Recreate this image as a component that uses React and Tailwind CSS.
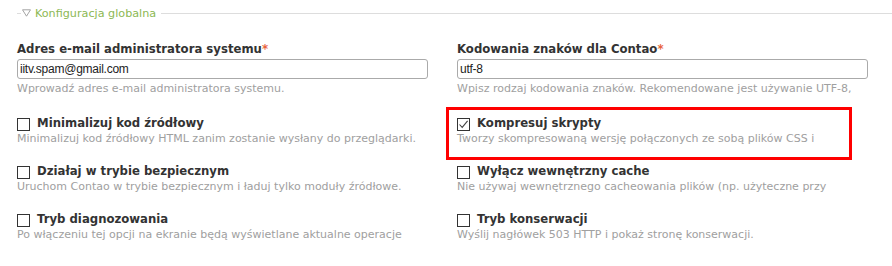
const VERDANA = { fontFamily: '"DejaVu Sans", Verdana, sans-serif' };

function Checkbox({ checked }) {
  return (
    <span className="mt-[2px] flex h-[13px] w-[13px] shrink-0 items-center justify-center border border-[#333] bg-white">
      {checked && (
        <svg width="11" height="11" viewBox="0 0 11 11" fill="none">
          <path d="M1.5 5.5 L4.2 8.4 L9.6 1.8" stroke="#444" strokeWidth="1.1" />
        </svg>
      )}
    </span>
  );
}

function TextField({ label, value, help }) {
  return (
    <div className="flex flex-col">
      <div className="h-[15px] text-[11.7px] font-bold leading-[15px] text-[#333]">
        {label}
        <span className="text-[#e8643c]">*</span>
      </div>
      <div className="mt-[2px] flex h-[20px] w-[411px] items-center rounded-[3px] border border-[#aaa] bg-white px-[2px]">
        <span
          className="text-[12px] tracking-[-0.25px] text-[#222]"
          style={{ fontFamily: '"Liberation Sans", Arial, sans-serif' }}
        >
          {value}
        </span>
      </div>
      <div className="mt-[2px] h-[15px] whitespace-nowrap text-[11px] leading-[15px] text-[#a0a0a0]">{help}</div>
    </div>
  );
}

function CheckField({ label, help, checked }) {
  return (
    <div className="flex h-[48px] flex-col">
      <div className="flex h-[15px] items-start gap-[7px]">
        <Checkbox checked={checked} />
        <span className="text-[11.7px] font-bold leading-[15px] text-[#333]">{label}</span>
      </div>
      <div className="h-[15px] whitespace-nowrap text-[11px] leading-[15px] text-[#a0a0a0]">{help}</div>
    </div>
  );
}

export default function App() {
  return (
    <div className="h-[266px] w-[892px] overflow-hidden bg-white" style={VERDANA}>
      {/* Fieldset legend */}
      <div className="flex h-[26px] items-center pl-[17px]">
        <span className="h-px w-[4px] bg-[#ddd]" />
        <svg className="ml-[1px]" width="9" height="8" viewBox="0 0 9 8" fill="none">
          <path d="M0.5 0.8 H8.5 L4.5 7.2 Z" stroke="#9a9a9a" strokeWidth="0.9" />
        </svg>
        <span className="ml-[4px] text-[11.2px] leading-[15px] text-[#8cb854]">Konfiguracja globalna</span>
        <span className="ml-[5px] h-px flex-1 bg-[#ddd]" />
      </div>

      <div className="mt-[16px] grid grid-cols-[440px_440px] pl-[17px]">
        <TextField
          label="Adres e-mail administratora systemu"
          value="iitv.spam@gmail.com"
          help="Wprowadź adres e-mail administratora systemu."
        />
        <TextField
          label="Kodowania znaków dla Contao"
          value="utf-8"
          help="Wpisz rodzaj kodowania znaków. Rekomendowane jest używanie UTF-8,"
        />
      </div>

      <div className="mt-[20px] grid grid-cols-[440px_440px] pl-[17px]">
        <CheckField
          label="Minimalizuj kod źródłowy"
          help="Minimalizuj kod źródłowy HTML zanim zostanie wysłany do przeglądarki."
        />
        <div className="relative">
          <CheckField
            checked
            label="Kompresuj skrypty"
            help="Tworzy skompresowaną wersję połączonych ze sobą plików CSS i"
          />
          <div className="pointer-events-none absolute left-[-11px] top-[-9px] h-[53px] w-[406px] border-[3px] border-[#f00]" />
        </div>
        <CheckField
          label="Działaj w trybie bezpiecznym"
          help="Uruchom Contao w trybie bezpiecznym i ładuj tylko moduły źródłowe."
        />
        <CheckField
          label="Wyłącz wewnętrzny cache"
          help="Nie używaj wewnętrznego cacheowania plików (np. użyteczne przy"
        />
        <CheckField
          label="Tryb diagnozowania"
          help="Po włączeniu tej opcji na ekranie będą wyświetlane aktualne operacje"
        />
        <CheckField label="Tryb konserwacji" help="Wyślij nagłówek 503 HTTP i pokaż stronę konserwacji." />
      </div>
    </div>
  );
}
